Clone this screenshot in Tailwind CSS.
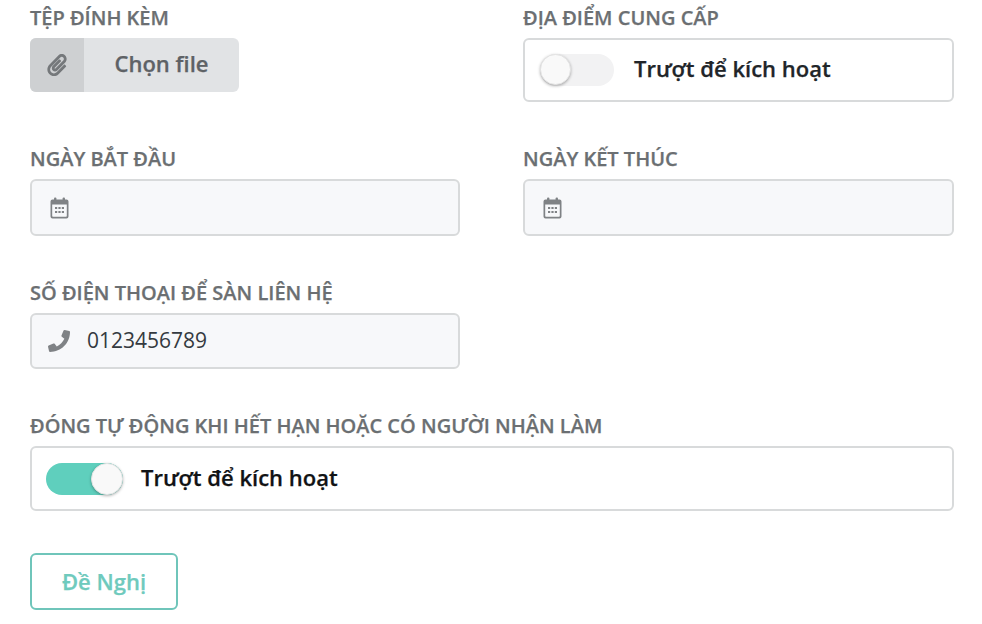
<!DOCTYPE html>
<html lang="vi">
<head>
    <meta charset="UTF-8">
    <title>Form</title>
    <script src="https://cdn.jsdelivr.net/npm/@tailwindcss/browser@4"></script>
</head>
<body class="bg-white overflow-hidden font-['Open_Sans',sans-serif]">
    <form class="w-[982px] h-[624px] pl-[30px] pr-[28px] pt-[4px]">
        <div class="grid grid-cols-[430px_431px] gap-x-[63px] h-[141px]">
            <div>
                <label class="block h-[34px] leading-[27px] text-[20px] font-semibold text-[#6b6f72] [-webkit-text-stroke:0.25px]">TỆP ĐÍNH KÈM</label>
                <div class="flex w-[209px] h-[54px] rounded-[6px] overflow-hidden bg-[#e1e3e5]">
                    <div class="w-[54px] bg-[#ced0d2] flex items-center justify-center">
                        <svg class="w-[22px] h-[22px] text-[#75787b]" viewBox="0 0 448 512" fill="currentColor"><path d="M43.2 466.8c-58.3-60.3-57.3-157.5 1.4-217.6L254.3 34.6c44.3-45.4 116.3-45.4 160.7 0 43.9 45 44 117.5 0 162.6L232.3 384c-29.9 30.6-78.5 30.2-107.9-.9-28.4-29.9-27.5-77.4 1.2-106.8l143.1-146.3c6.2-6.3 16.3-6.4 22.6-.2l22.9 22.4c6.3 6.2 6.4 16.3.2 22.6L171.4 321.1c-4.9 5-5.2 13.3-.6 18.1 4.4 4.6 11.4 4.7 15.9.1l182.7-186.8c19.6-20 19.6-52.6 0-72.7-19.2-19.7-50.2-19.7-69.5 0L90.2 294c-35.5 36.3-36 95.2-1.2 131.2 34.7 35.9 90.9 36 125.7.4l172-175.9c6.2-6.3 16.3-6.4 22.6-.3l22.9 22.4c6.3 6.2 6.4 16.3.3 22.6L260.4 470.4c-60.2 61.6-157.9 61-217.2-3.6z"/></svg>
                    </div>
                    <div class="flex-1 flex items-center justify-center pb-[3px] text-[22px] font-semibold text-[#5e6266] [-webkit-text-stroke:0.25px]">Chọn file</div>
                </div>
            </div>
            <div>
                <label class="block h-[34px] leading-[27px] text-[20px] font-semibold text-[#6b6f72] [-webkit-text-stroke:0.25px]">ĐỊA ĐIỂM CUNG CẤP</label>
                <div class="flex items-center gap-[21px] h-[64px] pl-[15px] rounded-[6px] border-2 border-[#d8dadb]">
                    <div class="relative w-[74px] h-[32px] rounded-full bg-[#f2f2f3]">
                        <span class="absolute left-0 top-0 w-[31px] h-[31px] rounded-full bg-[#f9f9f9] border border-[#e4e4e4] shadow-[0_1px_3px_rgba(0,0,0,0.3)]"></span>
                    </div>
                    <span class="pb-[3px] -ml-px text-[22px] font-semibold text-[#212529] [-webkit-text-stroke:0.25px]">Trượt để kích hoạt</span>
                </div>
            </div>
        </div>

        <div class="grid grid-cols-[430px_431px] gap-x-[63px] h-[134px]">
            <div>
                <label class="block h-[34px] leading-[27px] text-[20px] font-semibold text-[#6b6f72] [-webkit-text-stroke:0.25px]">NGÀY BẮT ĐẦU</label>
                <div class="flex items-center h-[57px] pl-[18px] rounded-[6px] border-2 border-[#d8dadb] bg-[#f7f8fa]">
                    <svg class="w-[19px] h-[22px]" viewBox="0 0 19 22" fill="#7f8285"><rect x="4" y="0.5" width="2.4" height="4" rx="1"/><rect x="12.6" y="0.5" width="2.4" height="4" rx="1"/><path fill-rule="evenodd" d="M2.5 2.5h14a2 2 0 0 1 2 2v15a2 2 0 0 1-2 2h-14a2 2 0 0 1-2-2v-15a2 2 0 0 1 2-2zM2.2 7.5v11.500a.8.8 0 0 0 .8.8h13a.8.8 0 0 0 .8-.8V7.500z"/><rect x="5" y="10" width="2.200" height="2"/><rect x="8.400" y="10" width="2.200" height="2"/><rect x="11.800" y="10" width="2.200" height="2"/><rect x="5" y="14" width="2.200" height="2"/><rect x="8.400" y="14" width="2.200" height="2"/><rect x="11.800" y="14" width="2.200" height="2"/></svg>
                </div>
            </div>
            <div>
                <label class="block h-[34px] leading-[27px] text-[20px] font-semibold text-[#6b6f72] [-webkit-text-stroke:0.25px]">NGÀY KẾT THÚC</label>
                <div class="flex items-center h-[57px] pl-[18px] rounded-[6px] border-2 border-[#d8dadb] bg-[#f7f8fa]">
                    <svg class="w-[19px] h-[22px]" viewBox="0 0 19 22" fill="#7f8285"><rect x="4" y="0.5" width="2.4" height="4" rx="1"/><rect x="12.6" y="0.5" width="2.4" height="4" rx="1"/><path fill-rule="evenodd" d="M2.5 2.5h14a2 2 0 0 1 2 2v15a2 2 0 0 1-2 2h-14a2 2 0 0 1-2-2v-15a2 2 0 0 1 2-2zM2.2 7.5v11.500a.8.8 0 0 0 .8.8h13a.8.8 0 0 0 .8-.8V7.500z"/><rect x="5" y="10" width="2.200" height="2"/><rect x="8.400" y="10" width="2.200" height="2"/><rect x="11.800" y="10" width="2.200" height="2"/><rect x="5" y="14" width="2.200" height="2"/><rect x="8.400" y="14" width="2.200" height="2"/><rect x="11.800" y="14" width="2.200" height="2"/></svg>
                </div>
            </div>
        </div>

        <div class="w-[430px] h-[133px]">
            <label class="block h-[34px] leading-[28px] text-[20px] font-semibold text-[#6b6f72] [-webkit-text-stroke:0.25px]">SỐ ĐIỆN THOẠI ĐỂ SÀN LIÊN HỆ</label>
            <div class="flex items-center h-[56px] pl-[16px] rounded-[6px] border-2 border-[#d8dadb] bg-[#f7f8fa]">
                <svg class="w-[22px] h-[22px]" viewBox="0 0 512 512" fill="#7f8285"><path d="M493.400 24.600l-104-24c-11.300-2.600-22.900 3.300-27.500 13.900l-48 112c-4.200 9.800-1.400 21.300 6.900 28l60.600 49.600c-36 76.700-98.900 140.500-177.200 177.200l-49.600-60.600c-6.800-8.300-18.200-11.100-28-6.900l-112 48C3.900 366.500-2 378.100.600 389.400l24 104C27.100 504.200 36.700 512 48 512c256.100 0 464-207.500 464-464 0-11.200-7.700-20.900-18.600-23.400z"/></svg>
                <span class="ml-[17px] pb-[1px] text-[21px] text-[#343a40]">0123456789</span>
            </div>
        </div>

        <div class="w-[924px] h-[107px]">
            <label class="block h-[34px] leading-[28px] text-[20px] font-semibold text-[#6b6f72] [-webkit-text-stroke:0.25px]">ĐÓNG TỰ ĐỘNG KHI HẾT HẠN HOẶC CÓ NGƯỜI NHẬN LÀM</label>
            <div class="flex items-center gap-[18px] h-[65px] pl-[14px] rounded-[6px] border-2 border-[#d8dadb]">
                <div class="relative w-[77px] h-[32px] rounded-full bg-[#5fcfbd]">
                    <span class="absolute right-0 top-0 w-[32px] h-[32px] rounded-full bg-[#f9f9f9] border border-[#e4e4e4] shadow-[0_1px_3px_rgba(0,0,0,0.3)]"></span>
                </div>
                <span class="pb-[2px] text-[22px] font-semibold text-[#111315] [-webkit-text-stroke:0.25px]">Trượt để kích hoạt</span>
            </div>
        </div>

        <button type="button" class="mt-[34px] w-[148px] h-[57px] rounded-[6px] border-2 border-[#6fc5ba] bg-white text-[22px] font-semibold text-[#6fcabd] [-webkit-text-stroke:0.25px]">Đề Nghị</button>
    </form>
</body>
</html>
